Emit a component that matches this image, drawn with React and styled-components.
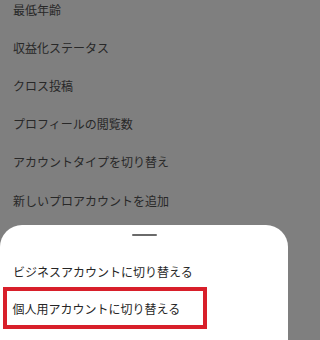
import React from "react";
import styled, { createGlobalStyle } from "styled-components";

const Global = createGlobalStyle`
  html, body { margin: 0; padding: 0; }
  body { width: 288px; height: 340px; overflow: hidden; background: #7f7f7f; }
  #root { width: 288px; height: 340px; }
`;

const Screen = styled.div`
  width: 288px;
  height: 340px;
  display: flex;
  flex-direction: column;
  background: #7f7f7f;
  font-family: "Noto Sans CJK JP", "Noto Sans", sans-serif;
  overflow: hidden;
`;

const List = styled.div`
  display: flex;
  flex-direction: column;
  margin-top: -10px;
`;

const Row = styled.div`
  height: 38.2px;
  display: flex;
  align-items: center;
  padding-left: 13px;
  font-size: 12px;
  color: #282828;
  white-space: nowrap;
`;

const Sheet = styled.div`
  margin-top: 6px;
  flex: 1;
  background: #ffffff;
  border-radius: 22px 22px 0 0;
  display: flex;
  flex-direction: column;
  padding-top: 9px;
`;

const Handle = styled.div`
  align-self: center;
  width: 25px;
  height: 2px;
  background: #6a6a6a;
  border-radius: 1px;
`;

const Option = styled.div`
  margin-top: 26px;
  padding-left: 13px;
  height: 20px;
  line-height: 20px;
  font-size: 12px;
  color: #262626;
  white-space: nowrap;
`;

const Highlight = styled.div`
  margin-top: 5px;
  margin-left: 3px;
  width: 204px;
  height: 42px;
  box-sizing: border-box;
  border: 4.5px solid #d81f2a;
  padding: 8px 0 0 5.5px;
  font-size: 12px;
  line-height: 20px;
  color: #262626;
  white-space: nowrap;
`;

const items = [
  "最低年齢",
  "収益化ステータス",
  "クロス投稿",
  "プロフィールの閲覧数",
  "アカウントタイプを切り替え",
  "新しいプロアカウントを追加",
];

export default function App() {
  return (
    <>
      <Global />
      <Screen>
        <List>
          {items.map((t) => (
            <Row key={t}>{t}</Row>
          ))}
        </List>
        <Sheet>
          <Handle />
          <Option>ビジネスアカウントに切り替える</Option>
          <Highlight>個人用アカウントに切り替える</Highlight>
        </Sheet>
      </Screen>
    </>
  );
}
